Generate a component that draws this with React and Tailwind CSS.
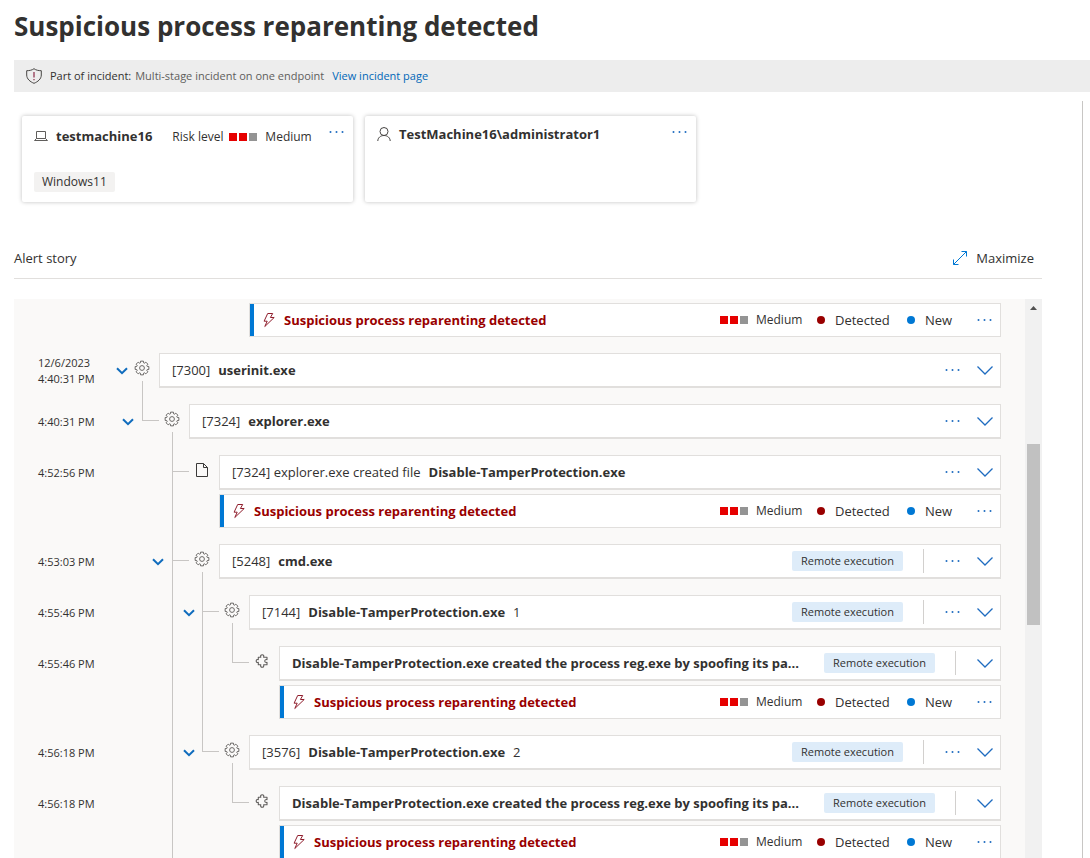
import React from "react";

const gearPath = (() => {
  const teeth = 8;
  const pts = [];
  const step = (Math.PI * 2) / teeth;
  for (let i = 0; i < teeth; i++) {
    const a = i * step - Math.PI / 2;
    [
      [-0.36, 5.4],
      [-0.24, 7],
      [0.24, 7],
      [0.36, 5.4],
    ].forEach(([o, r]) => {
      pts.push(`${(8 + r * Math.cos(a + o * step * 1.1)).toFixed(2)} ${(8 + r * Math.sin(a + o * step * 1.1)).toFixed(2)}`);
    });
  }
  return `M${pts.join("L")}Z`;
})();

function GearIcon() {
  return (
    <svg width="16" height="16" viewBox="0 0 16 16" fill="none" stroke="#6b6967" strokeWidth="1" strokeLinejoin="round" aria-hidden="true">
      <path d={gearPath} />
      <circle cx="8" cy="8" r="2.4" />
    </svg>
  );
}

function FileIcon() {
  return (
    <svg width="16" height="16" viewBox="0 0 16 16" fill="none" stroke="#3b3a39" strokeWidth="1" aria-hidden="true">
      <path d="M2.500 1.500H9.500L13.500 5.500V14.500H2.500Z" />
      <path d="M9.500 1.500V5.500H13.500" />
    </svg>
  );
}

function PuzzleIcon() {
  return (
    <svg width="16" height="16" viewBox="0 0 16 16" fill="none" stroke="#605e5c" strokeWidth="1.1" strokeLinejoin="round" aria-hidden="true">
      <path d="M4.300 4.200H6.800C6.200 2.600 7 1.800 8.200 1.800S10.200 2.600 9.600 4.200H13V6.600C11.300 6.300 10.800 7 10.800 8S11.300 9.700 13 9.400V11.800H9.600C10.200 13.400 9.400 14.200 8.200 14.200S6.200 13.400 6.800 11.800H4.300V9.400C2.900 9.800 2.200 9 2.200 8S2.900 6.200 4.300 6.600Z" />
    </svg>
  );
}

function BoltIcon() {
  return (
    <svg width="14" height="16" viewBox="0 0 14 16" fill="none" stroke="#8f1d2c" strokeWidth="1" strokeLinejoin="round" aria-hidden="true" className="shrink-0">
      <path d="M5.700 1.500H10.700L8.400 5.500H12.200L2.800 14.500L5.200 9.200H2.100Z" />
    </svg>
  );
}

function Chevron() {
  return (
    <svg width="16" height="16" viewBox="0 0 16 16" fill="none" stroke="#1f6cc0" strokeWidth="1.3" aria-hidden="true">
      <path d="M0.500 4.500L8 12L15.500 4.500" />
    </svg>
  );
}

function MoreButton({ label }) {
  return (
    <button type="button" aria-label={label} className="w-4 shrink-0 cursor-pointer">
      <svg width="16" height="16" viewBox="0 0 16 16" fill="#1f6cc0" aria-hidden="true">
        <circle cx="1.500" cy="8" r="1" />
        <circle cx="7.500" cy="8" r="1" />
        <circle cx="13.500" cy="8" r="1" />
      </svg>
    </button>
  );
}

function RiskSquares() {
  return (
    <span className="flex shrink-0 gap-[2px]" aria-hidden="true">
      <span className="size-2 bg-[#e60000]" />
      <span className="size-2 bg-[#e60000]" />
      <span className="size-2 bg-[#949494]" />
    </span>
  );
}

function Alert() {
  return (
    <div className="flex h-[34px] items-center border border-[#e1dfdd] bg-white pr-[7px]">
      <span className="h-full w-1 shrink-0 bg-[#0078d4]" />
      <span className="ml-2 flex min-w-0 flex-1 items-center gap-2">
        <BoltIcon />
        <a href="#alert" className="truncate font-bold text-[#990000]">Suspicious process reparenting detected</a>
      </span>
      <RiskSquares />
      <span className="ml-2 w-[61px] text-[12px]">Medium</span>
      <span className="size-2 rounded-full bg-[#990000]" />
      <span className="ml-[10px] w-[72px]">Detected</span>
      <span className="size-2 rounded-full bg-[#0078d4]" />
      <span className="ml-[10px] w-[52px]">New</span>
      <MoreButton label="Alert actions" />
    </div>
  );
}

function ProcessCard({ pid, action, name, count, tag, more }) {
  return (
    <div className="flex h-[35px] items-center border border-b-2 border-[#e1dfdd] bg-white pr-[7px] pl-3">
      <p className="min-w-0 flex-1 truncate pr-3">
        {pid && <span>[{pid}]</span>}
        {action && <span> {action}</span>}
        <b className={pid ? "ml-2" : ""}>{name}</b>
        {count && <span className="ml-2">{count}</span>}
      </p>
      {tag && (
        <>
          <span className="w-[111px] shrink-0 rounded-[2px] bg-[#deecf9] text-center text-[11px] leading-5">Remote execution</span>
          <span className="ml-5 h-6 w-px bg-[#d2d0ce]" />
        </>
      )}
      {more && (
        <span className="ml-[21px] flex">
          <MoreButton label="More actions" />
        </span>
      )}
      <button type="button" aria-label="Show details" className={more ? "ml-4 cursor-pointer" : "ml-[21px] cursor-pointer"}>
        <Chevron />
      </button>
    </div>
  );
}

function Toggle({ narrow }) {
  return (
    <button
      type="button"
      aria-label="Collapse"
      className={narrow ? "flex h-[35px] w-full cursor-pointer items-center justify-center pr-[2px]" : "flex h-[35px] w-full cursor-pointer items-center justify-center pl-[2px]"}
    >
      <svg width="12" height="8" viewBox="0 0 12 8" fill="none" stroke="#0f6cbd" strokeWidth="2" aria-hidden="true">
        <path d="M1 1.200L6 6.200L11 1.200" />
      </svg>
    </button>
  );
}

/* Guide kinds: "none" empty, "line" passes through, "tee" branches and goes on, "end" branches and stops. */
function Guide({ kind, narrow, toggle }) {
  return (
    <div className={narrow ? "flex w-[22px] shrink-0" : "flex w-[30px] shrink-0"}>
      {(kind === "line" || kind === "tee") && <span className="w-px shrink-0 bg-[#c8c6c4]" />}
      {kind === "end" && <span className="h-[17px] w-px bg-[#c8c6c4]" />}
      {(kind === "tee" || kind === "end") && <span className="mt-4 h-px w-4 bg-[#c8c6c4]" />}
      {toggle && <Toggle narrow={narrow} />}
    </div>
  );
}

const icons = { gear: <GearIcon />, file: <FileIcon />, puzzle: <PuzzleIcon /> };

function TreeItem({ date, time, guides, toggleAt, icon, open, alert, ...card }) {
  return (
    <li className="flex">
      <div className="flex h-[35px] w-[74px] shrink-0 flex-col justify-center text-[11px] leading-4 whitespace-nowrap">
        {date && <span>{date}</span>}
        <span>{time}</span>
      </div>
      {guides.map((kind, i) => (
        <Guide key={i} kind={kind} narrow={i === guides.length - 1} toggle={toggleAt === i} />
      ))}
      <div className="flex w-4 shrink-0 flex-col items-center">
        <span className="flex h-7 items-center pt-[2px]">{icons[icon]}</span>
        {open && <span className="w-px flex-1 bg-[#c8c6c4]" />}
      </div>
      <div className="ml-[9px] min-w-0 flex-1 pb-4">
        <ProcessCard {...card} />
        {alert && (
          <div className="mt-1">
            <Alert />
          </div>
        )}
      </div>
    </li>
  );
}

const spoof = "Disable-TamperProtection.exe created the process reg.exe by spoofing its pa...";

const items = [
  { date: "12/6/2023", time: "4:40:31 PM", guides: ["none"], toggleAt: 0, icon: "gear", open: true, pid: "7300", name: "userinit.exe", more: true },
  { time: "4:40:31 PM", guides: ["none", "end"], toggleAt: 0, icon: "gear", open: true, pid: "7324", name: "explorer.exe", more: true },
  { time: "4:52:56 PM", guides: ["none", "none", "tee"], icon: "file", pid: "7324", action: "explorer.exe created file", name: "Disable-TamperProtection.exe", more: true, alert: true },
  { time: "4:53:03 PM", guides: ["none", "none", "tee"], toggleAt: 1, icon: "gear", open: true, pid: "5248", name: "cmd.exe", tag: true, more: true },
  { time: "4:55:46 PM", guides: ["none", "none", "line", "tee"], toggleAt: 2, icon: "gear", open: true, pid: "7144", name: "Disable-TamperProtection.exe", count: "1", tag: true, more: true },
  { time: "4:55:46 PM", guides: ["none", "none", "line", "line", "end"], icon: "puzzle", name: spoof, tag: true, alert: true },
  { time: "4:56:18 PM", guides: ["none", "none", "line", "end"], toggleAt: 2, icon: "gear", open: true, pid: "3576", name: "Disable-TamperProtection.exe", count: "2", tag: true, more: true },
  { time: "4:56:18 PM", guides: ["none", "none", "line", "none", "end"], icon: "puzzle", name: spoof, tag: true, alert: true },
];

function EntityCard({ children }) {
  return (
    <section className="h-[86px] w-[331px] rounded-[2px] bg-white pt-2 pr-2 pl-3 shadow-[0_0_4px_rgba(0,0,0,0.25)]">{children}</section>
  );
}

export default function App() {
  return (
    <div className="flex h-screen flex-col overflow-hidden bg-white pl-[14px] font-['Open_Sans','Noto_Sans',sans-serif] text-[13px] leading-5 text-[#323130]">
      <h1 className="pt-2 pb-4 text-[26px] leading-9 font-bold">Suspicious process reparenting detected</h1>
      <div className="flex h-8 shrink-0 items-center bg-[#ededed] pl-3 text-[11px]">
        <svg width="16" height="16" viewBox="0 0 16 16" fill="none" stroke="#484644" strokeWidth="1" aria-hidden="true">
          <path d="M8 0.700C6 2.200 3.500 2.700 0.700 2.700V7C0.700 11 4.200 13.800 8 15.300C11.800 13.800 15.300 11 15.300 7V2.700C12.500 2.700 10 2.200 8 0.700Z" />
          <path d="M8 4V9.500M8 11V12.200" stroke="#8a2846" strokeWidth="1.200" />
        </svg>
        <span className="ml-2">Part of incident:</span>
        <span className="ml-1 text-[#605e5c]">Multi-stage incident on one endpoint</span>
        <a href="#incident" className="ml-2 text-[#0067b8]">View incident page</a>
      </div>

      <div className="flex min-h-0 flex-1">
        <main className="flex min-w-0 flex-1 flex-col">
          <div className="mt-6 ml-2 flex gap-3">
            <EntityCard>
              <div className="flex items-start">
                <div className="flex flex-1 items-center pt-px">
                  <svg width="14" height="12" viewBox="0 0 14 12" fill="none" stroke="#605e5c" strokeWidth="1" aria-hidden="true">
                    <path d="M2.500 1.500H11.500V8.500H2.500ZM0.500 10.500H13.500L11.500 8.500H2.500Z" />
                  </svg>
                  <h2 className="ml-2 font-bold">testmachine16</h2>
                  <div className="ml-5 flex items-center pt-[2px] text-[12px]">
                    <span className="w-[57px]">Risk level</span>
                    <RiskSquares />
                    <span className="ml-2">Medium</span>
                  </div>
                </div>
                <span className="flex">
                  <MoreButton label="Device actions" />
                </span>
              </div>
              <p className="mt-[25px] w-fit rounded-[2px] bg-[#f3f2f1] px-2 text-[12px]">Windows11</p>
            </EntityCard>
            <EntityCard>
              <div className="flex items-start">
                <div className="flex flex-1 items-center">
                  <svg width="14" height="16" viewBox="0 0 14 16" fill="none" stroke="#484644" strokeWidth="1" aria-hidden="true">
                    <circle cx="7" cy="5.500" r="4" />
                    <path d="M0.800 15C0.800 11.800 3.500 9.500 7 9.500S13.200 11.800 13.200 15" />
                  </svg>
                  <h2 className="ml-2 font-bold">TestMachine16\administrator1</h2>
                </div>
                <span className="flex">
                  <MoreButton label="User actions" />
                </span>
              </div>
            </EntityCard>
          </div>

          <div className="mt-[46px] flex items-center justify-between border-b border-[#e1dfdd] pr-2 pb-[10px]">
            <h2>Alert story</h2>
            <button type="button" className="flex cursor-pointer items-center gap-2">
              <svg width="16" height="16" viewBox="0 0 16 16" fill="none" stroke="#0078d4" strokeWidth="1" aria-hidden="true">
                <path d="M1.500 14.500L14.500 1.500M9.500 1.500H14.500V6.500M1.500 9.500V14.500H6.500" />
              </svg>
              Maximize
            </button>
          </div>

          <div className="mt-5 flex min-h-0 flex-1 bg-[#faf9f8]">
            <ul className="min-w-0 flex-1 overflow-hidden pt-1 pr-6 pl-6">
              <li className="pb-4 pl-[211px]">
                <Alert />
              </li>
              {items.map((item, i) => (
                <TreeItem key={i} {...item} />
              ))}
            </ul>
            <div className="flex w-[17px] shrink-0 flex-col items-center bg-[#f1f1f1]" aria-hidden="true">
              <svg width="17" height="17" viewBox="0 0 17 17" fill="#505050">
                <path d="M5 11L8.500 7L12 11Z" />
              </svg>
              <span className="mt-32 h-[181px] w-[13px] bg-[#c1c1c1]" />
            </div>
          </div>
        </main>
        <div className="mt-[9px] ml-10 w-2 border-l border-[#c8c6c4]" />
      </div>
    </div>
  );
}
